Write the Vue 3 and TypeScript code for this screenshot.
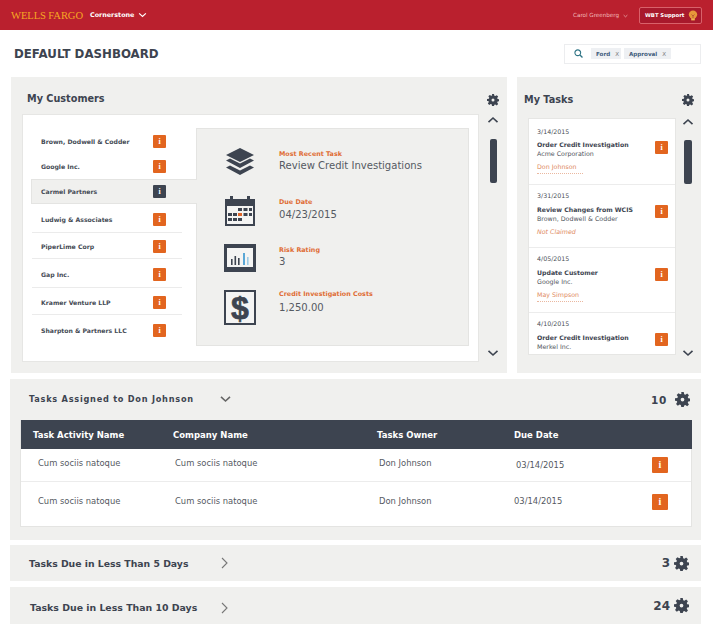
<script setup lang="ts">
const customers = [
  { name: 'Brown, Dodwell & Codder', h: 26, line: false },
  { name: 'Google Inc.', h: 25, line: false },
  { name: 'Carmel Partners', h: 25, active: true, line: false },
  { name: 'Ludwig & Associates', h: 29, line: true },
  { name: 'PiperLime Corp', h: 26, line: true },
  { name: 'Gap Inc.', h: 29, line: true },
  { name: 'Kramer Venture LLP', h: 27, line: true },
  { name: 'Sharpton & Partners LLC', h: 30, line: false },
]
const tasks = [
  { date: '3/14/2015', title: 'Order Credit Investigation', sub: 'Acme Corporation', who: 'Don Johnson', h: 66 },
  { date: '3/31/2015', title: 'Review Changes from WCIS', sub: 'Brown, Dodwell & Codder', who: 'Not Claimed', italic: true, h: 63 },
  { date: '4/05/2015', title: 'Update Customer', sub: 'Google Inc.', who: 'May Simpson', h: 65 },
  { date: '4/10/2015', title: 'Order Credit Investigation', sub: 'Merkel Inc.', who: '', h: 43 },
]
const rows = [
  { a: 'Cum sociis natoque', b: 'Cum sociis natoque', c: 'Don Johnson', d: '03/14/2015', h: 33 },
  { a: 'Cum sociis natoque', b: 'Cum sociis natoque', c: 'Don Johnson', d: '03/14/2015', h: 45 },
]
</script>

<template>
  <div class="page">
    <svg class="defs" width="0" height="0" aria-hidden="true">
      <symbol id="gear" viewBox="0 0 24 24">
        <path fill-rule="evenodd" d="M10 0h4l.7 3.4 1.9.8 2.9-1.9 2.8 2.8-1.9 2.9.8 1.9 3.4.6v4l-3.4.7-.8 1.9 1.9 2.9-2.8 2.8-2.9-1.9-1.9.8L14 24h-4l-.7-3.3-1.9-.8-2.9 1.9-2.8-2.8 1.9-2.9-.8-1.9L0 14v-4l3.8-.6.8-1.9-1.9-2.9 2.8-2.8 2.9 1.9 1.9-.8zM12 9a3 3 0 1 0 0 6 3 3 0 0 0 0-6z" />
      </symbol>
      <symbol id="up" viewBox="0 0 12 8"><path d="M1.5 6.2 6 2l4.5 4.2" fill="none" stroke="currentColor" stroke-width="1.6" /></symbol>
      <symbol id="down" viewBox="0 0 12 8"><path d="M1.5 1.8 6 6l4.5-4.2" fill="none" stroke="currentColor" stroke-width="1.6" /></symbol>
    </svg>

    <header class="topbar">
      <div class="brand">WELLS FARGO</div>
      <div class="product">Cornerstone</div>
      <svg class="prod-chev" width="9" height="6"><use href="#down" /></svg>
      <div class="spacer"></div>
      <div class="user">Carol Greenberg</div>
      <svg class="user-chev" width="5" height="4"><use href="#down" /></svg>
      <button class="support">
        <span>WBT Support</span>
        <svg width="10" height="11" viewBox="0 0 10 11">
          <circle cx="5" cy="4.6" r="4.2" fill="#e8973a" />
          <rect x="3.2" y="8.2" width="3.6" height="2.2" fill="#f2b552" />
          <path d="M3.5 4.5 5 6l1.5-1.5M5 6v2.4" stroke="#a8432c" stroke-width=".7" fill="none" />
        </svg>
      </button>
    </header>

    <div class="titlebar">
      <h1>DEFAULT DASHBOARD</h1>
      <div class="search">
        <svg class="mag" width="9" height="9" viewBox="0 0 10 10">
          <circle cx="4.2" cy="4.2" r="3.2" fill="none" stroke="#2f7485" stroke-width="1.2" />
          <path d="M6.6 6.6 9.4 9.4" stroke="#2f7485" stroke-width="1.5" />
        </svg>
        <span class="chip chip-ford"><b>Ford</b><i>X</i></span>
        <span class="chip chip-appr"><b>Approval</b><i>X</i></span>
      </div>
    </div>

    <main class="main">
      <div class="top">
        <section class="panel customers">
          <div class="panel-head">
            <h2>My Customers</h2>
            <svg class="gear-sm" width="12" height="12"><use href="#gear" /></svg>
          </div>
          <div class="cust-body">
            <div class="white">
              <div class="cust-list">
                <div
                  v-for="c in customers"
                  :key="c.name"
                  class="cust"
                  :class="{ active: c.active, line: c.line }"
                  :style="{ height: c.h + 'px' }"
                >
                  <span class="cust-name">{{ c.name }}</span>
                  <span class="info" :class="{ dark: c.active }">i</span>
                </div>
              </div>
              <div class="detail">
                <div class="item item1">
                  <div class="ic">
                    <svg width="30" height="28" viewBox="0 0 30 28">
                      <path d="M15 0 29 7 15 14 1 7z" fill="#3d4450" />
                      <path d="M1 12.5 5 10.5 15 15.6 25 10.5 29 12.5 15 20z" fill="#3d4450" />
                      <path d="M1 19.5 5 17.5 15 22.6 25 17.5 29 19.5 15 27z" fill="#3d4450" />
                    </svg>
                  </div>
                  <div class="tx"><label>Most Recent Task</label><p>Review Credit Investigations</p></div>
                </div>
                <div class="item item2">
                  <div class="ic">
                    <svg width="32" height="32" viewBox="0 0 32 32">
                      <path d="M1 4h5V1h3v3h14V1h3v3h5v27H1z" fill="#3d4450" />
                      <rect x="3" y="11" width="26" height="18" fill="#f4f4f3" />
                      <g fill="#3d4450">
                        <rect x="14" y="13" width="4" height="3" /><rect x="19.5" y="13" width="4" height="3" /><rect x="25" y="13" width="3" height="3" />
                        <rect x="4" y="18" width="4" height="3" /><rect x="9" y="18" width="4" height="3" /><rect x="19.5" y="18" width="4" height="3" /><rect x="25" y="18" width="3" height="3" />
                        <rect x="4" y="23" width="4" height="3" /><rect x="9" y="23" width="4" height="3" /><rect x="14" y="23" width="4" height="3" />
                      </g>
                      <rect x="14" y="18" width="4" height="3" fill="#e0662a" />
                    </svg>
                  </div>
                  <div class="tx"><label>Due Date</label><p>04/23/2015</p></div>
                </div>
                <div class="item item3">
                  <div class="ic">
                    <svg width="32" height="28" viewBox="0 0 32 28">
                      <rect width="32" height="28" fill="#3d4450" />
                      <rect x="3" y="4" width="26" height="19" fill="#f4f4f3" />
                      <g fill="#3d4450"><rect x="7" y="15" width="1.6" height="6" /><rect x="10.5" y="12" width="1.6" height="9" /><rect x="14" y="14" width="1.6" height="7" /></g>
                      <rect x="19" y="9" width="2" height="12" fill="#5aa7d6" />
                      <rect x="23" y="13" width="1.6" height="8" fill="#9ccbe6" />
                    </svg>
                  </div>
                  <div class="tx"><label>Risk Rating</label><p>3</p></div>
                </div>
                <div class="item item4">
                  <div class="ic dollar"><span>$</span></div>
                  <div class="tx"><label>Credit Investigation Costs</label><p>1,250.00</p></div>
                </div>
              </div>
            </div>
            <div class="scroller sc-c">
              <svg class="chev" width="12" height="8"><use href="#up" /></svg>
              <div class="thumb"></div>
              <div class="spacer"></div>
              <svg class="chev" width="12" height="8"><use href="#down" /></svg>
            </div>
          </div>
        </section>

        <section class="panel mytasks">
          <div class="panel-head">
            <h2>My Tasks</h2>
            <svg class="gear-sm" width="12" height="12"><use href="#gear" /></svg>
          </div>
          <div class="tasks-body">
            <div class="tasklist">
              <div v-for="t in tasks" :key="t.date" class="task" :style="{ height: t.h + 'px' }">
                <div class="task-tx">
                  <div class="t-date">{{ t.date }}</div>
                  <div class="t-title">{{ t.title }}</div>
                  <div class="t-sub">{{ t.sub }}</div>
                  <div v-if="t.who" class="t-who" :class="{ it: t.italic }">{{ t.who }}</div>
                </div>
                <span class="info">i</span>
              </div>
            </div>
            <div class="scroller sc-t">
              <svg class="chev" width="12" height="8"><use href="#up" /></svg>
              <div class="thumb"></div>
              <div class="spacer"></div>
              <svg class="chev" width="12" height="8"><use href="#down" /></svg>
            </div>
          </div>
        </section>
      </div>

      <section class="acc acc-open">
        <div class="acc-head">
          <span class="acc-title wide">Tasks Assigned to Don Johnson</span>
          <svg class="acc-chev" width="13" height="8"><use href="#down" /></svg>
          <div class="spacer"></div>
          <span class="acc-count wide">10</span>
          <svg class="gear-md" width="15" height="15"><use href="#gear" /></svg>
        </div>
        <div class="table">
          <div class="thead tgrid">
            <span>Task Activity Name</span><span>Company Name</span><span>Tasks Owner</span><span>Due Date</span>
          </div>
          <div v-for="(r, i) in rows" :key="i" class="trow tgrid" :class="i === 0 ? 'sep' : 'last'" :style="{ height: r.h + 'px' }">
            <span class="ca">{{ r.a }}</span><span class="cb">{{ r.b }}</span><span class="cc">{{ r.c }}</span><span class="cd">{{ r.d }}</span>
            <span class="info big">i</span>
          </div>
        </div>
      </section>

      <section class="acc acc-closed first">
        <span class="acc-title flat">Tasks Due in Less Than 5 Days</span>
        <svg class="right" width="7" height="12" viewBox="0 0 7 12"><path d="M1 1l5 5-5 5" fill="none" stroke="#777" stroke-width="1.1" /></svg>
        <div class="spacer"></div>
        <span class="acc-count flat">3</span>
        <svg class="gear-md" width="15" height="15"><use href="#gear" /></svg>
      </section>
      <section class="acc acc-closed second">
        <span class="acc-title flat">Tasks Due in Less Than 10 Days</span>
        <svg class="right" width="7" height="12" viewBox="0 0 7 12"><path d="M1 1l5 5-5 5" fill="none" stroke="#777" stroke-width="1.1" /></svg>
        <div class="spacer"></div>
        <span class="acc-count flat">24</span>
        <svg class="gear-md" width="15" height="15"><use href="#gear" /></svg>
      </section>
    </main>
  </div>
</template>

<style>
html, body { margin: 0; background: #fff; }
</style>

<style scoped>
.page { width: 713px; height: 639px; overflow: hidden; font-family: "DejaVu Sans", Verdana, sans-serif; color: #3d4450; position: relative; }
.defs { position: absolute; }
.spacer { flex: 1; }
svg { fill: currentColor; display: block; flex: none; }

.topbar { height: 30px; background: #ba202e; display: flex; align-items: center; padding: 0 11px; box-sizing: border-box; }
.brand { font-family: "Liberation Serif", serif; font-size: 10.6px; color: #f6a623; width: 79px; letter-spacing: -.1px; }
.product { font-size: 6.4px; font-weight: 700; color: #fff; }
.prod-chev { color: #fff; margin-left: 4px; }
.user { font-size: 5.6px; color: #f3bcbc; }
.user-chev { color: #f3c6c6; margin: 1px 0 0 4px; }
.support { margin-left: 11px; width: 63px; height: 17px; background: #a8192c; border: 1px solid #d9616a; border-radius: 2px; padding: 0 3px 0 5px; display: flex; align-items: center; justify-content: space-between; box-sizing: border-box; color: #fff; font: 700 5.3px "DejaVu Sans", sans-serif; white-space: nowrap; }

.titlebar { height: 47px; position: relative; display: flex; align-items: center; justify-content: space-between; padding: 0 12px 0 14px; box-sizing: border-box; }
h1 { margin: 0; font-size: 11.8px; font-weight: 700; color: #3d4450; }
.search { width: 137px; height: 20px; border: 1px solid #ecedef; box-sizing: border-box; display: flex; align-items: center; padding-left: 9px; }
.mag { margin-right: 8px; }
.chip { height: 11px; background: #eef0f3; display: inline-flex; align-items: center; box-sizing: border-box; padding-left: 5px; font-size: 5.6px; color: #3f5c7c; }
.chip b { font-weight: 700; }
.chip i { font-style: normal; color: #777; margin-left: 5px; }
.chip-ford { width: 30px; margin-right: 3px; }
.chip-appr { width: 47px; }

.main { padding: 0 12px 0 10px; }
.top { display: flex; gap: 10px; height: 296px; margin-left: 1px; }
.panel { background: #f0f0ee; box-sizing: border-box; }
.customers { width: 496px; }
.mytasks { width: 184px; }
.panel-head { display: flex; justify-content: space-between; align-items: center; height: 37px; }
.customers .panel-head { padding: 5px 8px 0 16px; box-sizing: border-box; }
.customers .gear-sm { margin-top: 4px; }
.mytasks .panel-head { padding: 8px 7px 0 7px; box-sizing: border-box; }
h2 { margin: 0; font-size: 9.7px; font-weight: 700; color: #3d4450; }

.cust-body { display: flex; }
.white { width: 457px; height: 248px; margin-left: 11px; background: #fff; border: 1px solid #e6e6e4; box-sizing: border-box; display: flex; padding: 13px 9px 15px 8px; }
.cust-list { width: 165px; flex: none; }
.cust { display: flex; align-items: center; justify-content: space-between; padding: 0 16px 0 9px; box-sizing: border-box; width: 150px; margin-left: 1px; }
.cust.line { border-bottom: 1px solid #ebebeb; padding-top: 2px; }
.cust.active { width: 166px; margin-left: 0; background: #f0f0ee; border: 1px solid #e4e4e2; border-right: 0; position: relative; z-index: 1; padding-right: 31px; margin-right: -1px; }
.cust-name { font-size: 6.15px; font-weight: 700; color: #454b55; white-space: nowrap; }
.info { width: 13px; height: 13px; background: #e2651f; color: #fff; font: 700 8px/13px "Liberation Serif", serif; text-align: center; flex: none; border-radius: 1px; }
.info.dark { background: #3d4450; }
.detail { flex: 1; background: #f0f0ee; border: 1px solid #e4e4e2; box-sizing: border-box; padding-top: 19px; }
.item { display: flex; padding-left: 27px; }
.ic { width: 32px; margin-right: 23px; display: flex; justify-content: center; flex: none; }
.item1 { height: 47px; }
.item2 { height: 49px; }
.item3 { height: 46px; }
.tx label { display: block; font-size: 6.4px; line-height: 9px; font-weight: 700; color: #df6c34; }
.tx p { margin: 0; font-size: 10.05px; line-height: 14px; color: #555a62; }
.item1 .tx { padding-top: 2px; }
.item2 .tx { padding-top: 3px; }
.item3 .tx { padding-top: 2px; }
.item2 .tx p { margin-top: 1px; }
.item4 .tx p { margin-top: 2px; }
.dollar { width: 32px; height: 35px; border: 2px solid #3d4450; box-sizing: border-box; background: #f4f4f3; align-items: center; overflow: hidden; }
.dollar span { font: 700 32px/1 "Liberation Sans", sans-serif; color: #3d4450; -webkit-text-stroke: .7px #3d4450; }

.scroller { display: flex; flex-direction: column; align-items: center; color: #3d4450; box-sizing: border-box; }
.thumb { width: 7px; height: 44px; background: #3d4450; border-radius: 2px; }
.sc-c { width: 28px; height: 248px; padding: 2px 0 5px; }
.sc-c .thumb { margin-top: 15px; }
.sc-t { width: 24px; height: 239px; }
.sc-t .thumb { width: 8px; margin-top: 14px; }

.tasks-body { display: flex; margin-top: 4px; padding-left: 11px; }
.tasklist { width: 148px; height: 237px; background: #fff; border: 1px solid #e6e6e4; box-sizing: border-box; overflow: hidden; }
.task { display: flex; justify-content: space-between; padding: 6px 7px 0 8px; box-sizing: border-box; border-bottom: 1px solid #ececec; }
.task:first-child { padding-top: 8px; }
.task:first-child .t-title { margin-top: 4px; }
.task:last-child { border-bottom: 0; }
.t-date { font-size: 6.3px; line-height: 9px; color: #4a4f58; }
.t-title { font-size: 6.2px; line-height: 9px; font-weight: 700; color: #3d4450; margin-top: 5px; white-space: nowrap; }
.t-sub { font-size: 6.3px; line-height: 9px; color: #4f545c; white-space: nowrap; }
.t-who { font-size: 6.3px; line-height: 9px; color: #e08a62; margin-top: 4px; padding-bottom: 2px; border-bottom: 1px dotted #eab8a0; width: 46px; white-space: nowrap; }
.t-who.it { font-style: italic; border-bottom: 0; }
.task .info { margin-top: 14px; }

.acc { background: #f0f0ee; box-sizing: border-box; }
.acc-open { margin-top: 6px; height: 161px; }
.acc-head { height: 41px; display: flex; align-items: center; padding: 0 11px 0 19px; box-sizing: border-box; }
.acc-title { font-weight: 700; color: #3d4450; white-space: nowrap; }
.acc-count { font-weight: 700; color: #3d4450; }
.wide.acc-title { font-size: 8.2px; letter-spacing: .75px; margin-top: -2px; }
.wide.acc-count { font-size: 10.5px; letter-spacing: .7px; margin-right: 8px; }
.acc-chev { margin-left: 25px; color: #666; margin-top: -2px; }
.table { margin: 0 9px 0 10px; height: 107px; background: #fff; border: 1px solid #e4e4e2; border-top: 0; box-sizing: border-box; }
.tgrid { display: grid; grid-template-columns: 140px 204px 137px 1fr; align-items: center; position: relative; padding-left: 12px; }
.thead { height: 29px; background: #3d4450; color: #fff; font-size: 8.5px; font-weight: 700; margin: 0 -1px 0 0; }
.trow { font-size: 8.4px; color: #55595f; box-sizing: border-box; padding-bottom: 4px; }
.trow.sep { border-bottom: 1px solid #ececec; }
.trow.last { padding-bottom: 8px; }
.ca { padding-left: 5px; }
.cb, .cc, .cd { padding-left: 2px; }
.sep .cd { position: relative; top: 2px; }
.last .cd { padding-left: 0; }
.info.big { position: absolute; right: 23px; top: 8px; width: 16px; height: 16px; font-size: 10px; line-height: 16px; }
.last .info.big { top: 12px; }

.acc-closed { display: flex; align-items: center; padding: 0 12px 0 19px; }
.first { margin-top: 5px; height: 36px; }
.second { margin-top: 6px; height: 37px; }
.flat.acc-title { font-size: 9.3px; width: 192px; flex: none; }
.second .flat.acc-title { margin-top: 4px; padding-left: 1px; width: 191px; font-size: 9.4px; }
.second .right { margin-top: 4px; }
.flat.acc-count { font-size: 12px; margin-right: 4px; }
</style>
